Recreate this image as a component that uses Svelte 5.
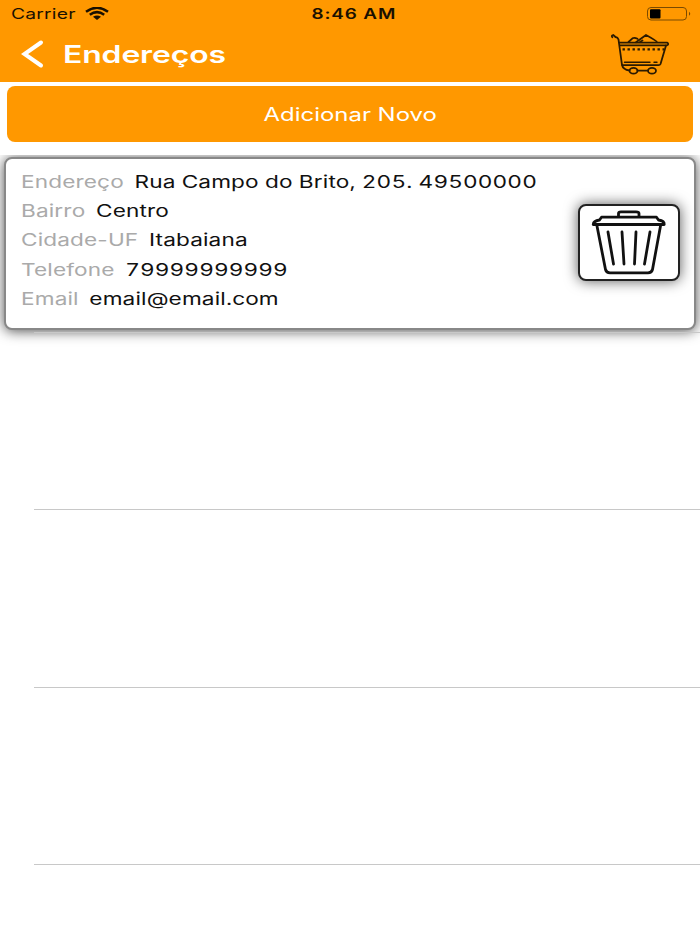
<script>
  const fields = [
    { label: 'Endereço', value: 'Rua Campo do Brito, 205. 49500000' },
    { label: 'Bairro', value: 'Centro' },
    { label: 'Cidade-UF', value: 'Itabaiana' },
    { label: 'Telefone', value: '79999999999' },
    { label: 'Email', value: 'email@email.com' }
  ];

  const emptyRows = [1, 2, 3];
</script>

<div class="screen">
  <header>
    <div class="status">
      <div class="carrier">
        <span class="wide left">Carrier</span>
      </div>
      <svg class="wifi" width="24" height="14" viewBox="0 0 24 14">
        <path d="M1 4.8Q12 -3.2 23 4.8M4.8 7.8Q12 2.4 19.2 7.8" fill="none" stroke="#1a1000" stroke-width="2.5" />
        <path d="M8 9.8Q12 7 16 9.8L12 13Z" fill="#1a1000" />
      </svg>
      <div class="time"><span class="wide">8:46 AM</span></div>
      <svg class="battery" width="46" height="16" viewBox="0 0 46 16">
        <rect x="1.5" y="1.5" width="39" height="12.5" rx="3.5" fill="none" stroke="#7a4a00" />
        <rect x="4" y="3.2" width="10.5" height="9.3" rx="1" fill="#000" />
        <path d="M43 5.8Q45.5 7.7 43 9.7Z" fill="#7a4a00" />
      </svg>
    </div>
    <div class="nav">
      <svg class="back" width="24" height="30" viewBox="0 0 24 30">
        <path d="M21 3.5L4.5 15L21 26.5" fill="none" stroke="#fff" stroke-width="4" stroke-linecap="round" stroke-linejoin="miter" />
      </svg>
      <h1><span class="wide left">Endereços</span></h1>
      <svg class="cart" width="60" height="42" viewBox="0 0 60 42" fill="none" stroke="#2b1a00" stroke-width="1.8" stroke-linecap="round" stroke-linejoin="round">
        <path d="M2.3 4.2Q1 2.6 3.2 2L5.5 4Q7.8 4.2 8.5 6.5L12 32Q13 36.5 19.5 37.5" />
        <path d="M9.5 9.6H57Q59.5 10.9 57 12.3H10" />
        <path d="M56 12.5L50.5 31Q50 32.2 48.5 32.2H12.5" />
        <path d="M18.5 9L22.5 5.3Q24.5 4.2 27.5 5.8M26 9.2L36 2Q47 8 47 9.2M30 9L32.5 7.5" />
        <path d="M12.5 16.4H54" stroke-width="2.4" stroke-dasharray="2.4 2.6" stroke-linecap="butt" />
        <path d="M14.5 29.3H40M44 29.3H47" stroke-width="1.4" />
        <ellipse cx="23.5" cy="37.7" rx="4" ry="2.9" />
        <ellipse cx="42" cy="37.7" rx="4" ry="2.9" />
        <path d="M27.5 37.7H38" />
      </svg>
    </div>
  </header>

  <button class="add"><span class="wide">Adicionar Novo</span></button>

  <div class="list">
    <div class="row">
      <div class="card">
        <div class="fields">
          {#each fields as field}
            <p class="wide left"><span class="label">{field.label}</span><span class="value">{field.value}</span></p>
          {/each}
        </div>
        <button class="trash" aria-label="Remover">
          <svg width="76" height="66" viewBox="0 0 76 66" fill="none" stroke="#111" stroke-width="2.8" stroke-linecap="round" stroke-linejoin="round">
            <path d="M27.5 6V3.5Q27.5 1.8 30 1.8H45Q48 1.8 48 3.5V6" />
            <path d="M10.5 7.2H65.5L67.5 10Q73.5 10.8 73.2 14.5H2.2Q2.5 10.8 8.5 10Z" />
            <path d="M6 16L14.5 59.5Q15.5 62.8 19 62.8H57Q60.5 62.8 61.5 59.5L69.5 16" />
            <path d="M17 22L22.5 54M31 22L33 54M45 22L43.5 54M59 22L53.5 54" />
          </svg>
        </button>
      </div>
    </div>
    {#each emptyRows as row (row)}
      <div class="row"></div>
    {/each}
  </div>
</div>

<style>
  :global(body) {
    margin: 0;
    background: #fff;
  }

  .screen {
    width: 700px;
    height: 934px;
    overflow: hidden;
    background: #fff;
    font-family: Inter, 'Liberation Sans', sans-serif;
    color: #111;
  }

  header {
    height: 82px;
    background: #ff9800;
  }

  .status {
    display: flex;
    align-items: center;
    height: 27px;
    padding: 0 8px 0 11px;
  }

  /* letterforms are stretched sideways, as on a scaled phone screen */
  .wide {
    display: inline-block;
    white-space: nowrap;
    transform: scaleX(1.33);
  }

  .left {
    transform-origin: left center;
  }

  .carrier {
    width: 74px;
    font-size: 14.5px;
    letter-spacing: 0.15px;
    color: #1a1000;
  }

  .time {
    flex: 1;
    padding-right: 47px;
    text-align: center;
    font-size: 14.2px;
    font-weight: 600;
    letter-spacing: 0.65px;
    color: #1a1000;
  }

  .nav {
    display: flex;
    align-items: center;
    height: 55px;
    padding: 0 30px 1px 20px;
    box-sizing: border-box;
  }

  h1 {
    flex: 1;
    margin: 0 0 0 19px;
    font-size: 24px;
    font-weight: 600;
    letter-spacing: -0.1px;
    color: #fff;
  }

  .add {
    display: block;
    width: 686px;
    height: 56px;
    margin: 4px 7px 13px;
    padding: 1px 0 0;
    border: 0;
    border-radius: 8px;
    background: #ff9800;
    color: #fff;
    font: 18px Inter, 'Liberation Sans', sans-serif;
  }

  .list {
    overflow: hidden;
  }

  .row {
    position: relative;
    height: 177.5px;
    box-sizing: border-box;
  }

  .row::after {
    content: '';
    position: absolute;
    left: 34px;
    right: 0;
    bottom: 0;
    height: 1px;
    background: #c8c8c8;
  }

  .card {
    display: flex;
    justify-content: space-between;
    height: 173px;
    margin: 0 4px;
    padding: 9px 14px 0 15px;
    box-sizing: border-box;
    position: relative;
    top: 2px;
    border: 2px solid #888;
    border-radius: 8px;
    background: #fff;
    box-shadow: 0 1px 13px rgba(0, 0, 0, 0.7);
  }

  .fields p {
    display: block;
    margin: 0;
    font-size: 17px;
    line-height: 29.2px;
    letter-spacing: 0.1px;
  }

  .label {
    margin-right: 8px;
    color: #aaa;
  }

  .value {
    letter-spacing: 0.1px;
    font-variant-numeric: tabular-nums;
  }

  .trash {
    width: 102px;
    height: 77px;
    margin-top: 35.5px;
    padding: 0;
    border: 2px solid #222;
    border-radius: 8px;
    background: #fff;
    box-shadow: 0 0 14px rgba(0, 0, 0, 0.65);
  }

  .trash svg {
    display: block;
    margin: 2px auto 0;
  }
</style>
